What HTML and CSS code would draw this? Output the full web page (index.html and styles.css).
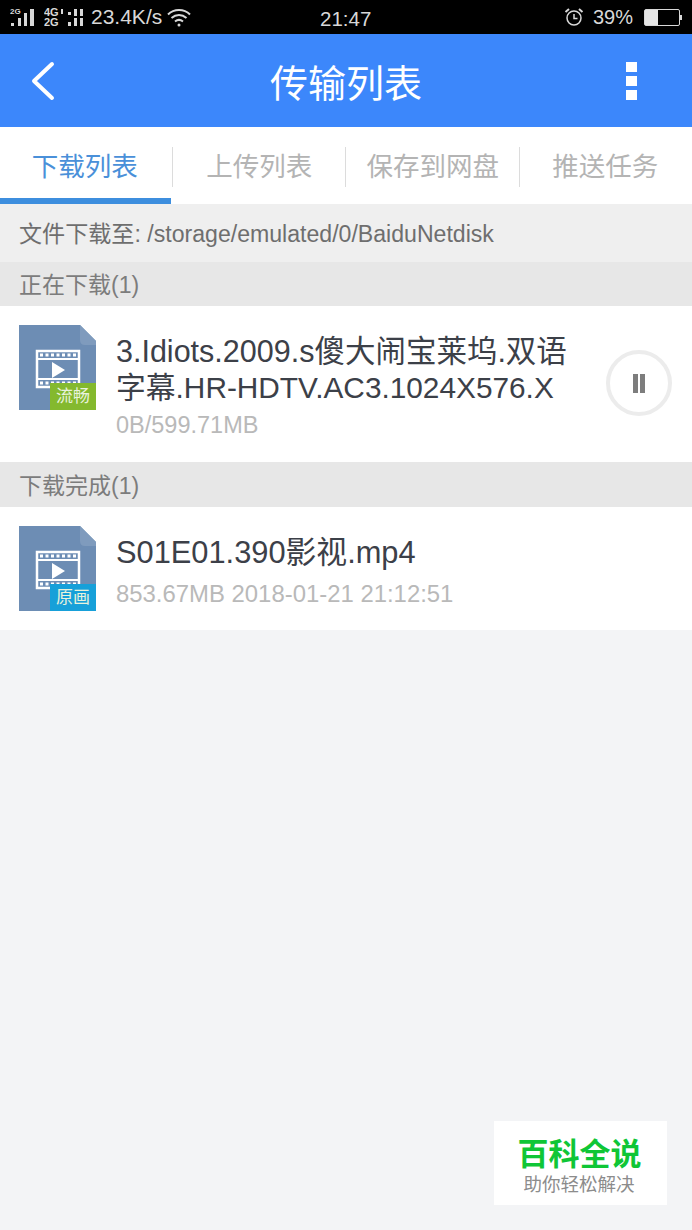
FILE: index.html
```html
<!DOCTYPE html>
<html lang="zh-CN">
<head>
    <meta charset="UTF-8">
    <meta name="viewport" content="width=device-width, initial-scale=1.0">
    <title>传输列表</title>
    <link rel="stylesheet" href="styles.css">
</head>
<body>
    <div class="status-bar">
        <div class="status-left">
            <svg class="signal signal-1" width="25" height="20" viewBox="0 0 25 20">
                <text x="0" y="7" class="signal-label">2G</text>
                <g fill="#d8d8d8">
                    <rect x="1" y="16" width="3" height="3"/>
                    <rect x="8" y="11" width="3" height="8"/>
                    <rect x="14" y="6" width="3" height="13"/>
                    <rect x="20" y="2" width="4" height="17"/>
                </g>
            </svg>
            <svg class="signal signal-2" width="40" height="20" viewBox="0 0 40 20">
                <text x="0" y="9" class="signal-label signal-label-big">4G</text>
                <text x="0" y="19" class="signal-label signal-label-big">2G</text>
                <g fill="#d8d8d8">
                    <rect x="17" y="2" width="2" height="5"/>
                    <rect x="24" y="5" width="3" height="3"/>
                    <rect x="24" y="15" width="3" height="4"/>
                    <rect x="30" y="2" width="3" height="7"/>
                    <rect x="30" y="11" width="3" height="8"/>
                    <rect x="36" y="2" width="3" height="7"/>
                    <rect x="36" y="11" width="3" height="8"/>
                </g>
            </svg>
            <span class="speed">23.4K/s</span>
            <svg class="wifi" width="24" height="20" viewBox="0 0 24 20" fill="none" stroke="#d8d8d8" stroke-width="2">
                <path d="M1 7.5C7 1.5 17 1.5 23 7.5"/>
                <path d="M4.500 11C9 7 15 7 19.500 11"/>
                <path d="M8 14.500C10.500 12.500 13.500 12.500 16 14.500"/>
                <circle cx="12" cy="18" r="1.500" fill="#d8d8d8" stroke="none"/>
            </svg>
        </div>
        <span class="clock">21:47</span>
        <div class="status-right">
            <svg class="alarm" width="20" height="20" viewBox="0 0 20 20" fill="none" stroke="#d8d8d8" stroke-width="1.500">
                <circle cx="10" cy="11" r="7"/>
                <path d="M10 7v4.500h3.500"/>
                <path d="M1.500 5L5 2M18.500 5L15 2" stroke-width="2"/>
            </svg>
            <span class="battery-text">39%</span>
            <div class="battery"><div class="battery-fill"></div></div>
            <div class="battery-tip"></div>
        </div>
    </div>

    <div class="app-bar">
        <svg class="back-icon" width="26" height="40" viewBox="0 0 26 40" fill="none" stroke="#fff" stroke-width="4" stroke-linecap="round" stroke-linejoin="round">
            <path d="M22 3L4 20l18 17"/>
        </svg>
        <h1 class="app-title">传输列表</h1>
        <div class="more-icon"><i></i><i></i><i></i></div>
    </div>

    <div class="tabs">
        <div class="tab tab-active">下载列表</div>
        <div class="tab">上传列表</div>
        <div class="tab">保存到网盘</div>
        <div class="tab">推送任务</div>
    </div>

    <div class="path-bar">文件下载至: /storage/emulated/0/BaiduNetdisk</div>

    <div class="section-title">正在下载(1)</div>
    <div class="file-row file-row-big">
        <div class="file-icon">
            <svg width="78" height="85" viewBox="0 0 78 85">
                <path d="M0 0H61L78 17V85H0Z" fill="#6d8db4"/>
                <path d="M61 0L78 17V20H66Q61 20 61 15Z" fill="#7f9bbd"/>
                <g fill="none" stroke="#fff">
                    <rect x="18" y="26" width="42" height="36" stroke-width="2.500"/>
                    <path d="M18 34H60M18 54H60" stroke-width="2"/>
                    <path d="M21 30H58M21 58H58" stroke-width="3" stroke-dasharray="3 2.500"/>
                </g>
                <path d="M33 37L46 45 33 53Z" fill="#fff"/>
            </svg>
            <span class="file-badge badge-green">流畅</span>
        </div>
        <div class="file-info">
            <div class="file-name">
                <span class="name-line">3.Idiots.2009.s傻大闹宝莱坞.双语</span>
                <span class="name-line name-line-2">字幕.HR-HDTV.AC3.1024X576.X</span>
            </div>
            <div class="file-meta">0B/599.71MB</div>
        </div>
        <div class="pause-btn"><i></i><i></i></div>
    </div>

    <div class="section-title section-title-2">下载完成(1)</div>
    <div class="file-row file-row-small">
        <div class="file-icon">
            <svg width="78" height="85" viewBox="0 0 78 85">
                <path d="M0 0H61L78 17V85H0Z" fill="#6d8db4"/>
                <path d="M61 0L78 17V20H66Q61 20 61 15Z" fill="#7f9bbd"/>
                <g fill="none" stroke="#fff">
                    <rect x="18" y="26" width="42" height="36" stroke-width="2.500"/>
                    <path d="M18 34H60M18 54H60" stroke-width="2"/>
                    <path d="M21 30H58M21 58H58" stroke-width="3" stroke-dasharray="3 2.500"/>
                </g>
                <path d="M33 37L46 45 33 53Z" fill="#fff"/>
            </svg>
            <span class="file-badge badge-blue">原画</span>
        </div>
        <div class="file-info">
            <div class="file-name">S01E01.390影视.mp4</div>
            <div class="file-meta">853.67MB 2018-01-21 21:12:51</div>
        </div>
    </div>

    <div class="watermark">
        <div class="watermark-title">百科全说</div>
        <div class="watermark-sub">助你轻松解决</div>
    </div>
</body>
</html>
```

FILE: styles.css
```css
body {
    margin: 0;
    height: 1230px;
    overflow: hidden;
    position: relative;
    background-color: #f3f4f6;
    font-family: "Liberation Sans", "Noto Sans CJK SC", sans-serif;
}

.status-bar {
    height: 34px;
    background-color: #000;
    color: #d8d8d8;
    display: flex;
    align-items: center;
    justify-content: space-between;
    position: relative;
    padding: 0 10px;
}

.status-left, .status-right {
    display: flex;
    align-items: center;
}

.signal-1 {
    margin-right: 9px;
}

.signal-2 {
    margin-right: 7px;
}

.signal-label {
    font-size: 8px;
    font-weight: bold;
    fill: #d8d8d8;
}

.signal-label-big {
    font-size: 11px;
}

.speed {
    font-size: 21px;
    margin-right: 5px;
}

.clock {
    position: absolute;
    left: 320px;
    top: 7px;
    font-size: 20.5px;
}

.battery-text {
    font-size: 20px;
    margin: 0 11px 0 9px;
}

.battery {
    width: 34px;
    height: 15px;
    border: 1px solid #d8d8d8;
    border-radius: 2px;
}

.battery-fill {
    width: 39%;
    height: 100%;
    background-color: #e6e6e6;
}

.battery-tip {
    width: 2px;
    height: 5px;
    background-color: #d8d8d8;
}

.app-bar {
    height: 93px;
    background-color: #3c87fb;
    display: flex;
    align-items: center;
    justify-content: space-between;
    padding: 0 55px 0 30px;
}

.back-icon {
    flex: none;
}

.app-title {
    margin: 0 0 0 10px;
    font-size: 38px;
    font-weight: normal;
    color: #fff;
}

.more-icon {
    display: flex;
    flex-direction: column;
    gap: 4px;
}

.more-icon i {
    display: block;
    width: 11px;
    height: 10px;
    background-color: #fff;
}

.tabs {
    height: 77px;
    background-color: #fff;
    display: flex;
}

.tab {
    width: 174px;
    height: 77px;
    box-sizing: border-box;
    padding: 21px 2px 0 0;
    text-align: center;
    font-size: 26.5px;
    line-height: 38px;
    color: #b4b4b4;
    position: relative;
    white-space: nowrap;
}

.tab:last-child {
    width: 172px;
}

.tab::after {
    content: "";
    position: absolute;
    right: 1px;
    top: 20px;
    width: 1px;
    height: 40px;
    background-color: #dcdcdc;
}

.tab:last-child::after {
    display: none;
}

.tab-active {
    color: #4a90d9;
    padding-right: 4px;
}

.tab-active::before {
    content: "";
    position: absolute;
    left: 0;
    bottom: 0;
    width: 171px;
    height: 6px;
    background-color: #3d8ede;
}

.path-bar {
    height: 58px;
    background-color: #efefef;
    color: #6e6e6e;
    font-size: 23.1px;
    line-height: 60px;
    padding-left: 19px;
}

.section-title {
    height: 44px;
    background-color: #e7e7e7;
    color: #7c7c7c;
    font-size: 23px;
    line-height: 47px;
    padding-left: 19px;
}

.section-title-2 {
    height: 45px;
    line-height: 49px;
}

.file-row {
    background-color: #fff;
    display: flex;
    box-sizing: border-box;
    padding-left: 19px;
}

.file-row-big {
    height: 156px;
    padding-top: 19px;
}

.file-row-small {
    height: 123px;
    padding-top: 19px;
}

.file-icon {
    width: 77px;
    height: 85px;
    flex: none;
    position: relative;
    overflow: hidden;
}

.file-icon svg {
    display: block;
}

.file-badge {
    position: absolute;
    right: 0;
    bottom: 0;
    width: 46px;
    height: 27px;
    color: #e8f2dc;
    font-size: 17px;
    line-height: 28px;
    text-align: center;
}

.badge-green {
    background-color: #84b92e;
}

.badge-blue {
    background-color: #17a0d9;
}

.file-info {
    margin-left: 20px;
    width: 461px;
}

.file-name {
    font-size: 30.5px;
    line-height: 38px;
    color: #3c4048;
    margin-top: 7px;
}

.name-line {
    display: block;
    white-space: nowrap;
}

.name-line-2 {
    font-size: 29.8px;
    margin-top: -1px;
}

.file-meta {
    font-size: 23.5px;
    line-height: 34px;
    color: #b9b9b9;
    margin-top: 1px;
}

.file-row-small .file-name {
    font-size: 30.8px;
    margin-top: 8px;
}

.file-row-small .file-meta {
    font-size: 23.9px;
    margin-top: 5px;
}

.pause-btn {
    width: 66px;
    height: 66px;
    box-sizing: border-box;
    border: 4px solid #ececec;
    border-radius: 50%;
    margin: 25px 0 0 29px;
    flex: none;
    display: flex;
    align-items: center;
    justify-content: center;
    gap: 2px;
}

.pause-btn i {
    display: block;
    width: 5px;
    height: 19px;
    background-color: #7d7d7d;
}

.watermark {
    position: absolute;
    left: 494px;
    top: 1121px;
    width: 173px;
    height: 84px;
    background-color: #fff;
    text-align: center;
}

.watermark-title {
    font-size: 31px;
    line-height: 36px;
    margin: 16px 2px 0 0;
    font-weight: bold;
    color: #0fc636;
}

.watermark-sub {
    font-size: 18.500px;
    line-height: 24px;
    color: #8c8c8c;
    margin-right: 3px;
}
```
